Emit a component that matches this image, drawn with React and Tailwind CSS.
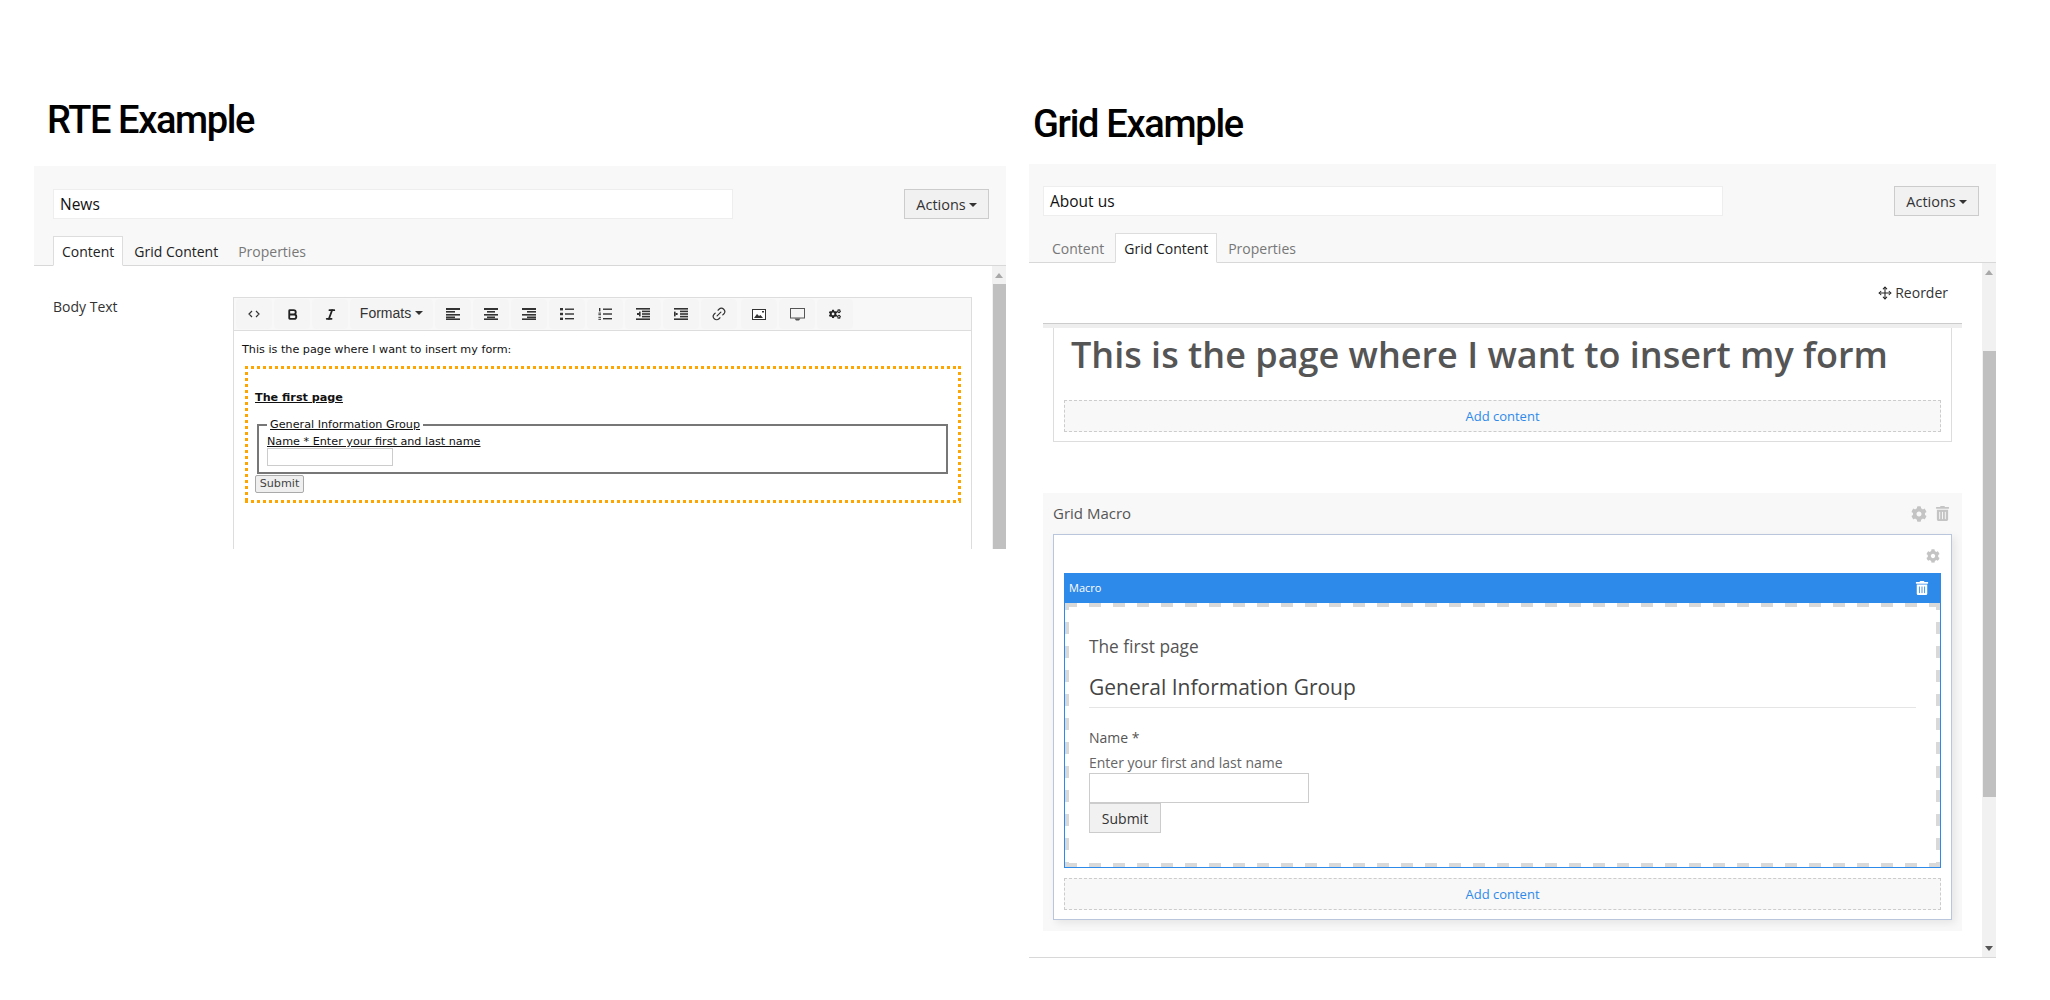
import React from 'react';
import { Bold, Italic, Link2, Move } from 'lucide-react';
import { FaCog, FaCogs, FaTrashAlt } from 'react-icons/fa';

// Small toolbar glyphs, drawn from horizontal bars
const Bars = ({ bars, dots }) => (
  <svg width="14" height="12" viewBox="0 0 14 12" fill="#333">
    {bars.map(([x, y, w, h], i) => <rect key={i} x={x} y={y} width={w} height={h} />)}
    {dots && dots.map(([x, y], i) => <rect key={i} x={x} y={y} width="3" height="2.4" />)}
  </svg>
);

const AlignLeft = () => <Bars bars={[[0, 0, 14, 2], [0, 3, 9, 1.6], [0, 6, 14, 1.6], [0, 8.5, 9, 1.6], [0, 10.4, 14, 1.6]]} />;
const AlignCenter = () => <Bars bars={[[0, 0, 14, 2], [3, 3, 8, 1.6], [0, 6, 14, 1.6], [3, 8.5, 8, 1.6], [0, 10.4, 14, 1.6]]} />;
const AlignRight = () => <Bars bars={[[0, 0, 14, 2], [5, 3, 9, 1.6], [0, 6, 14, 1.6], [5, 8.5, 9, 1.6], [0, 10.4, 14, 1.6]]} />;
const Bullets = () => <Bars bars={[[5, 0.5, 9, 1.4], [5, 5.3, 9, 1.4], [5, 10, 9, 1.4]]} dots={[[0, 0], [0, 4.8], [0, 9.6]]} />;
const Numbers = () => <Bars bars={[[5, 0.5, 9, 1.4], [5, 5.3, 9, 1.4], [5, 10, 9, 1.4], [1, 0, 1.4, 3.4], [0.4, 4.6, 2.6, 1], [0.4, 6.2, 2.6, 1], [0.4, 8.8, 2.6, 1], [0.4, 10.8, 2.6, 1]]} />;
const Outdent = () => <Bars bars={[[0, 0, 14, 1.6], [6, 2.6, 8, 1.6], [6, 5.2, 8, 1.6], [6, 7.8, 8, 1.6], [0, 10.4, 14, 1.6], [1, 5, 2, 2], [3, 3.6, 1.6, 4.8]]} />;
const Indent = () => <Bars bars={[[0, 0, 14, 1.6], [6, 2.6, 8, 1.6], [6, 5.2, 8, 1.6], [6, 7.8, 8, 1.6], [0, 10.4, 14, 1.6], [0, 3.6, 1.6, 4.8], [1.6, 5, 2, 2]]} />;

const CodeIcon = () => (
  <svg width="12" height="10" viewBox="0 0 12 10" fill="none" stroke="#333" strokeWidth="1.2">
    <path d="M4 2 1 5l3 3M8 2l3 3-3 3" />
  </svg>
);

const ImageIcon = () => (
  <svg width="14" height="11" viewBox="0 0 14 11">
    <rect x="0.5" y="0.5" width="13" height="10" fill="#fff" stroke="#333" />
    <path d="M2 9 5 5l2 2 1.5-1L11 9z" fill="#333" />
    <rect x="10" y="2" width="2" height="1.5" fill="#333" />
  </svg>
);

const MonitorIcon = () => (
  <svg width="15" height="13" viewBox="0 0 15 13" fill="none">
    <rect x="0.5" y="0.5" width="14" height="9.5" stroke="#555" />
    <path d="M4.5 10.5h6L9 12.5H6z" fill="#555" />
  </svg>
);

const Caret = ({ className = '' }) => (
  <span className={`inline-block w-0 h-0 border-x-[4px] border-x-transparent border-t-[4px] border-t-[#333] ${className}`} />
);

const toolbar = [
  [236, <CodeIcon />],
  [274, <Bold size={13} strokeWidth={3.4} color="#222" />],
  [312, <Italic size={13} strokeWidth={3.2} color="#222" />],
  [350, null],
  [435, <AlignLeft />],
  [473, <AlignCenter />],
  [511, <AlignRight />],
  [549, <Bullets />],
  [587, <Numbers />],
  [625, <Outdent />],
  [663, <Indent />],
  [701, <Link2 size={16} strokeWidth={1.8} color="#333" className="-rotate-45" />],
  [741, <ImageIcon />],
  [779, <MonitorIcon />],
  [817, <FaCogs size={12} color="#222" />],
];

function Toolbar() {
  return (
    <div className="h-[33px] bg-[#f8f8f8] border-b border-[#ddd] flex items-start pl-[2px] pt-[1px] gap-[2px]">
      {toolbar.map(([key, icon]) => (
        icon ? (
          <div key={key} className={`w-[36px] h-[30px] bg-[#f5f5f5] rounded flex items-center justify-center ${key === 741 ? 'ml-[2px]' : ''}`}>
            {icon}
          </div>
        ) : (
          <div key={key} className="w-[83px] h-[30px] bg-[#f5f5f5] rounded flex items-center justify-center gap-[4px] pb-[2px] font-['Liberation_Sans',sans-serif] text-[14px] text-[#333]">
            Formats <Caret />
          </div>
        )
      ))}
    </div>
  );
}

function Tabs({ active }) {
  return (
    <div className="flex items-end h-[30px] text-[14px]">
      {['Content', 'Grid Content', 'Properties'].map((tab) => {
        const isActive = tab === active;
        const tone = isActive || (tab === 'Grid Content' && active === 'Content') ? 'text-[#222]' : 'text-[#777]';
        return (
          <div
            key={tab}
            className={`h-[30px] flex items-center mr-[2px] -mb-px ${tone} ${isActive ? 'px-[8px] bg-white border border-[#ddd] border-b-white z-10' : 'px-[9px]'}`}
          >
            {tab}
          </div>
        );
      })}
    </div>
  );
}

function PanelHeader({ name, height }) {
  return (
    <div className={`bg-[#f8f8f8] border-b border-[#d8d8d8] ${height}`}>
      <div className="flex justify-between items-start pr-[17px]">
        <div className="w-[680px] h-[30px] bg-white border border-[#eee] flex items-center pl-[6px] pt-[2px] text-[15.5px] font-medium text-[#111]">
          {name}
        </div>
        <div className="w-[85px] h-[30px] bg-[#f1f1f1] border border-[#ccc] flex items-center justify-center gap-[3px] pt-[2px] text-[14.5px] text-[#333]">
          Actions <Caret className="border-t-[#222]" />
        </div>
      </div>
    </div>
  );
}

function ScrollBar({ thumbTop, thumbHeight, arrows }) {
  return (
    <div className="w-[14px] self-stretch bg-[#f1f1f1] relative shrink-0 flex flex-col items-center">
      <span className="mt-[7px] w-0 h-0 border-x-[4px] border-x-transparent border-b-[5px] border-b-[#a8a8a8]" />
      <div className={`absolute right-0 w-[13px] bg-[#c0c0c0] ${thumbTop} ${thumbHeight}`} />
      {arrows && <span className="mt-auto mb-[6px] w-0 h-0 border-x-[4px] border-x-transparent border-t-[5px] border-t-[#555]" />}
    </div>
  );
}

function RteExample() {
  return (
    <section className="w-[972px] ml-[34px] shrink-0">
      <h1 className="h-[166px] pt-[96px] pl-[13px] text-[38px] leading-[48px] font-medium tracking-[-1.4px] text-black font-['Roboto',sans-serif]">
        RTE Example
      </h1>
      <div className="pt-[23px] bg-[#f8f8f8]" />
      <div className="bg-[#f8f8f8] pl-[19px]">
        <PanelHeader name="News" height="h-[77px] -ml-[19px] pl-[19px]" />
      </div>
      <div className="relative -mt-[31px] pl-[19px] h-[30px] flex items-end border-0">
        <Tabs active="Content" />
      </div>
      <div className="flex h-[283px] mt-[1px] overflow-hidden">
        <div className="flex-1 flex items-start pt-[31px] pl-[19px]">
          <div className="w-[180px] text-[14px] text-[#333] leading-[20px]">Body Text</div>
          <div className="w-[739px] -mr-[20px] h-[260px] border-x border-t border-[#ddd] shrink-0 font-['DejaVu_Sans',sans-serif] text-[11.2px] text-[#111] relative z-0">
            <Toolbar />
            <p className="pl-[8px] pt-[12px] leading-[14px]">This is the page where I want to insert my form:</p>
            <div className="mt-[9px] ml-[11px] w-[716px] h-[137px] pl-[10px] pt-[25px] [background:linear-gradient(90deg,#ffa500_50%,transparent_50%)_0_0/6px_3px_repeat-x,linear-gradient(90deg,#ffa500_50%,transparent_50%)_0_100%/6px_3px_repeat-x,linear-gradient(#ffa500_50%,transparent_50%)_0_0/3px_6px_repeat-y,linear-gradient(#ffa500_50%,transparent_50%)_100%_0/3px_6px_repeat-y]">
              <div className="font-bold underline leading-[14px]">The first page</div>
              <fieldset className="mt-[13px] ml-[2px] w-[691px] h-[56px] border-2 border-[#777] pl-[8px] pt-0">
                <legend className="ml-0 px-[3px] underline leading-[13px]">General Information Group</legend>
                <div className="underline leading-[14px] mt-[4px]">Name * Enter your first and last name</div>
                <div className="w-[126px] h-[18px] border border-[#ccc] bg-white -mt-[1px]" />
              </fieldset>
              <div className="mt-px w-[49px] h-[18px] bg-[#efefef] border border-[#aaa] rounded-[2px] flex items-center justify-center text-[#444] leading-none">
                Submit
              </div>
            </div>
          </div>
        </div>
        <ScrollBar thumbTop="top-[18px]" thumbHeight="h-[265px]" />
      </div>
    </section>
  );
}

function AddContent() {
  return (
    <div className="h-[32px] pt-[1px] bg-[#f8f8f8] border border-dashed border-[#ccc] flex items-center justify-center text-[13px] font-medium text-[#2e8aea]">
      Add content
    </div>
  );
}

const Gray = 'text-[#c4c4c4]';

function GridExample() {
  return (
    <section className="w-[967px] ml-[23px] shrink-0">
      <h1 className="h-[164px] pt-[100px] pl-[4px] text-[38px] leading-[48px] font-medium tracking-[-1.3px] text-black font-['Roboto',sans-serif]">
        Grid Example
      </h1>
      <PanelHeader name="About us" height="h-[99px] pt-[22px] pl-[14px]" />
      <div className="relative -mt-[31px] pl-[14px] h-[30px] flex items-end">
        <Tabs active="Grid Content" />
      </div>
      <div className="flex h-[695px] mt-[1px] border-b border-[#d8d8d8] relative">
        <div className="w-[919px] ml-[14px]">
          <div className="h-[60px] flex items-start justify-end pt-[20px] pr-[14px] gap-[3px] text-[14px] text-[#333] leading-[20px]">
            <Move size={14} strokeWidth={1.8} color="#222" className="mt-[3px]" />
            Reorder
          </div>
          <div className="h-[5px] bg-[#eee] border-t border-[#ccc]" />
          <div className="mx-[10px] h-[114px] border-x border-b border-[#ddd] px-[10px] bg-white">
            <div className="h-[72px] flex items-start pl-[7px] text-[36px] leading-[54px] font-semibold text-[#555] whitespace-nowrap">
              This is the page where I want to insert my form
            </div>
            <AddContent />
          </div>

          <div className="mt-[51px] h-[438px] bg-[#f8f8f8] px-[10px]">
            <div className="h-[41px] flex items-center justify-between pr-[2px] text-[15px] text-[#555]">
              Grid Macro
              <div className={`flex items-center gap-[8px] ${Gray}`}>
                <FaCog size={16} />
                <FaTrashAlt size={15} />
              </div>
            </div>
            <div className="h-[386px] bg-white border border-[#b9c6dc] shadow-[3px_3px_8px_rgba(0,0,0,0.08)] px-[10px]">
              <div className="h-[38px] flex items-center justify-end pr-[1px] pt-[4px]">
                <FaCog size={14} className={Gray} />
              </div>
              <div className="h-[30px] bg-[#2e8aea] flex items-center justify-between pl-[5px] pr-[12px] text-[11px] text-white">
                Macro
                <FaTrashAlt size={14} />
              </div>
              <div className="h-[265px] border-x border-b border-[#2e8aea] pl-[24px] pr-[24px] [background:linear-gradient(90deg,#d9d9d9_50%,transparent_50%)_0_0/24px_4px_repeat-x,linear-gradient(90deg,#d9d9d9_50%,transparent_50%)_0_100%/24px_4px_repeat-x,linear-gradient(#d9d9d9_50%,transparent_50%)_0_19px/4px_24px_repeat-y,linear-gradient(#d9d9d9_50%,transparent_50%)_100%_19px/4px_24px_repeat-y]">
                <div className="pt-[32px] text-[17.3px] leading-[24px] text-[#555]">The first page</div>
                <div className="mt-[14px] border-b border-[#e5e5e5] text-[21px] leading-[29px] text-[#444] h-[35px]">General Information Group</div>
                <div className="mt-[20px] text-[14px] leading-[20px] text-[#555]">Name *</div>
                <div className="mt-[5px] text-[14px] leading-[20px] text-[#666] h-[20px]">Enter your first and last name</div>
                <div className="w-[220px] h-[30px] border border-[#ccc] bg-white" />
                <div className="w-[72px] h-[30px] bg-[#f1f1f1] border border-[#ccc] flex items-center justify-center text-[14px] text-[#333]">Submit</div>
              </div>
              <div className="mt-[10px]"><AddContent /></div>
            </div>
          </div>
        </div>
        <div className="ml-auto flex">
          <ScrollBar thumbTop="top-[88px]" thumbHeight="h-[446px]" arrows />
        </div>
      </div>
    </section>
  );
}

export default function App() {
  return (
    <div className="w-[2050px] h-[1000px] bg-white flex items-start overflow-hidden font-['Open_Sans',sans-serif]">
      <RteExample />
      <GridExample />
    </div>
  );
}
